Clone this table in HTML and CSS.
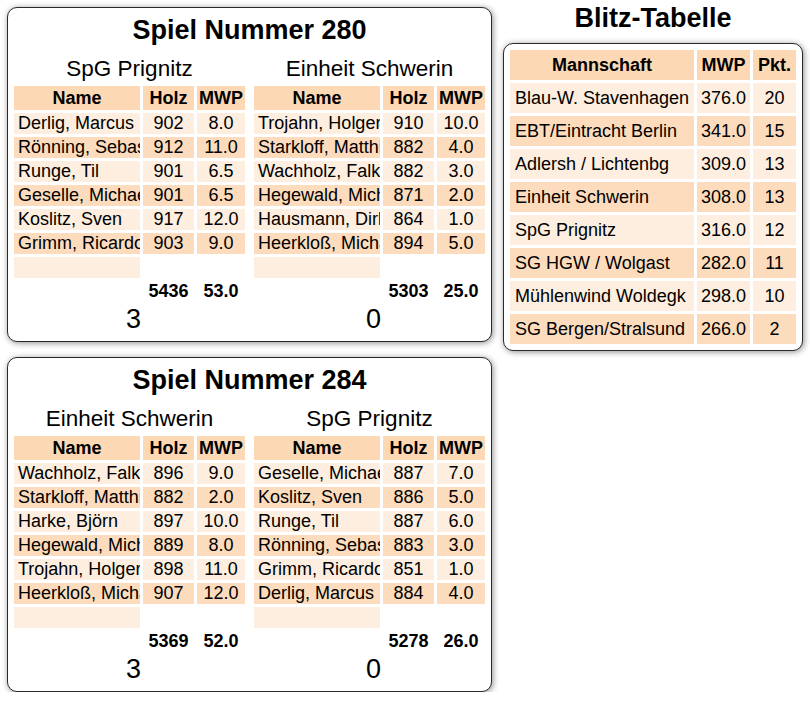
FILE: index.html
```html
<!DOCTYPE html>
<html lang="de">
<head>
<meta charset="utf-8">
<title>Blitz</title>
<link rel="stylesheet" href="styles.css">
</head>
<body>
<div class="page">
  <div class="games">
    <section class="box game">
      <h2 class="title">Spiel Nummer 280</h2>
      <div class="teams">
        <div class="team">
          <div class="team-name">SpG Prignitz</div>
          <table class="res">
            <tr><th class="c-name">Name</th><th class="c-holz">Holz</th><th class="c-mwp">MWP</th></tr>
            <tr><td class="n">Derlig, Marcus</td><td>902</td><td>8.0</td></tr>
            <tr><td class="n">Rönning, Sebastian</td><td>912</td><td>11.0</td></tr>
            <tr><td class="n">Runge, Til</td><td>901</td><td>6.5</td></tr>
            <tr><td class="n">Geselle, Michael</td><td>901</td><td>6.5</td></tr>
            <tr><td class="n">Koslitz, Sven</td><td>917</td><td>12.0</td></tr>
            <tr><td class="n">Grimm, Ricardo</td><td>903</td><td>9.0</td></tr>
            <tr><td class="n"></td><td class="blank"></td><td class="blank"></td></tr>
            <tr class="sum"><td class="blank"></td><td>5436</td><td>53.0</td></tr>
          </table>
          <div class="score">3</div>
        </div>
        <div class="team">
          <div class="team-name">Einheit Schwerin</div>
          <table class="res">
            <tr><th class="c-name">Name</th><th class="c-holz">Holz</th><th class="c-mwp">MWP</th></tr>
            <tr><td class="n">Trojahn, Holger</td><td>910</td><td>10.0</td></tr>
            <tr><td class="n">Starkloff, Matthias</td><td>882</td><td>4.0</td></tr>
            <tr><td class="n">Wachholz, Falko</td><td>882</td><td>3.0</td></tr>
            <tr><td class="n">Hegewald, Michael</td><td>871</td><td>2.0</td></tr>
            <tr><td class="n">Hausmann, Dirk</td><td>864</td><td>1.0</td></tr>
            <tr><td class="n">Heerkloß, Michael</td><td>894</td><td>5.0</td></tr>
            <tr><td class="n"></td><td class="blank"></td><td class="blank"></td></tr>
            <tr class="sum"><td class="blank"></td><td>5303</td><td>25.0</td></tr>
          </table>
          <div class="score">0</div>
        </div>
      </div>
    </section>

    <section class="box game">
      <h2 class="title">Spiel Nummer 284</h2>
      <div class="teams">
        <div class="team">
          <div class="team-name">Einheit Schwerin</div>
          <table class="res">
            <tr><th class="c-name">Name</th><th class="c-holz">Holz</th><th class="c-mwp">MWP</th></tr>
            <tr><td class="n">Wachholz, Falko</td><td>896</td><td>9.0</td></tr>
            <tr><td class="n">Starkloff, Matthias</td><td>882</td><td>2.0</td></tr>
            <tr><td class="n">Harke, Björn</td><td>897</td><td>10.0</td></tr>
            <tr><td class="n">Hegewald, Michael</td><td>889</td><td>8.0</td></tr>
            <tr><td class="n">Trojahn, Holger</td><td>898</td><td>11.0</td></tr>
            <tr><td class="n">Heerkloß, Michael</td><td>907</td><td>12.0</td></tr>
            <tr><td class="n"></td><td class="blank"></td><td class="blank"></td></tr>
            <tr class="sum"><td class="blank"></td><td>5369</td><td>52.0</td></tr>
          </table>
          <div class="score">3</div>
        </div>
        <div class="team">
          <div class="team-name">SpG Prignitz</div>
          <table class="res">
            <tr><th class="c-name">Name</th><th class="c-holz">Holz</th><th class="c-mwp">MWP</th></tr>
            <tr><td class="n">Geselle, Michael</td><td>887</td><td>7.0</td></tr>
            <tr><td class="n">Koslitz, Sven</td><td>886</td><td>5.0</td></tr>
            <tr><td class="n">Runge, Til</td><td>887</td><td>6.0</td></tr>
            <tr><td class="n">Rönning, Sebastian</td><td>883</td><td>3.0</td></tr>
            <tr><td class="n">Grimm, Ricardo</td><td>851</td><td>1.0</td></tr>
            <tr><td class="n">Derlig, Marcus</td><td>884</td><td>4.0</td></tr>
            <tr><td class="n"></td><td class="blank"></td><td class="blank"></td></tr>
            <tr class="sum"><td class="blank"></td><td>5278</td><td>26.0</td></tr>
          </table>
          <div class="score">0</div>
        </div>
      </div>
    </section>
  </div>

  <div class="standings">
    <h2 class="title blitz-title">Blitz-Tabelle</h2>
    <section class="box blitz">
      <table class="tab">
        <tr><th class="c-team">Mannschaft</th><th class="c-bmwp">MWP</th><th class="c-pkt">Pkt.</th></tr>
        <tr><td class="n">Blau-W. Stavenhagen</td><td>376.0</td><td>20</td></tr>
        <tr><td class="n">EBT/Eintracht Berlin</td><td>341.0</td><td>15</td></tr>
        <tr><td class="n">Adlersh / Lichtenbg</td><td>309.0</td><td>13</td></tr>
        <tr><td class="n">Einheit Schwerin</td><td>308.0</td><td>13</td></tr>
        <tr><td class="n">SpG Prignitz</td><td>316.0</td><td>12</td></tr>
        <tr><td class="n">SG HGW / Wolgast</td><td>282.0</td><td>11</td></tr>
        <tr><td class="n">Mühlenwind Woldegk</td><td>298.0</td><td>10</td></tr>
        <tr><td class="n">SG Bergen/Stralsund</td><td>266.0</td><td>2</td></tr>
      </table>
    </section>
  </div>
</div>
</body>
</html>
```

FILE: styles.css
```css
html, body {
  margin: 0;
  padding: 0;
  background: #ffffff;
}

body {
  font-family: "Liberation Sans", Arial, sans-serif;
  font-size: 18px;
  color: #000000;
}

.page {
  display: flex;
  align-items: flex-start;
  gap: 11px;
  padding: 2px 0 0 7px;
}

.games {
  display: flex;
  flex-direction: column;
  gap: 15px;
  margin-top: 5px;
}

.box {
  background: #ffffff;
  border: 1px solid #2a2a2a;
  border-radius: 10px;
  box-shadow: 1px 1px 6px rgba(0, 0, 0, 0.45);
}

.game {
  padding: 7px 3px 6px 3px;
}

.title {
  margin: 0;
  font-size: 27px;
  line-height: 31px;
  font-weight: bold;
  text-align: center;
}

.teams {
  display: flex;
  gap: 3px;
  margin-top: 10px;
}

.team {
  display: flex;
  flex-direction: column;
  width: 237px;
}

.team-name {
  font-size: 22.5px;
  line-height: 26px;
  text-align: center;
}

.res {
  margin-top: 1px;
  width: 237px;
  table-layout: fixed;
  border-collapse: separate;
  border-spacing: 3px;
}

.res th, .tab th {
  background: #fdd8b4;
  font-weight: bold;
  text-align: center;
  padding: 0;
}

.res th {
  height: 24px;
  line-height: 24px;
}

.c-name { width: 126px; }
.c-holz { width: 51px; }
.c-mwp { width: 48px; }

.res td {
  height: 21px;
  line-height: 21px;
  padding: 0;
  text-align: center;
  white-space: nowrap;
  overflow: hidden;
}

.res td.n, .tab td.n {
  text-align: left;
  padding-left: 4px;
}

.res tr:nth-child(even) td,
.tab tr:nth-child(even) td {
  background: #fdeedf;
}

.res tr:nth-child(odd) td,
.tab tr:nth-child(odd) td {
  background: #fddcbd;
}

.res tr:nth-child(n) td.blank,
.res tr.sum:nth-child(n) td {
  background: transparent;
}

.res tr.sum td {
  font-weight: bold;
}

.score {
  margin-top: -1px;
  padding-left: 8px;
  font-size: 27px;
  line-height: 31px;
  text-align: center;
}

.standings {
  display: flex;
  flex-direction: column;
  width: 300px;
}

.blitz-title {
  margin-top: 1px;
  margin-bottom: 9px;
}

.blitz {
  padding: 3px;
}

.tab {
  width: 292px;
  table-layout: fixed;
  border-collapse: separate;
  border-spacing: 3px;
}

.tab th {
  height: 30px;
  line-height: 30px;
}

.c-team { width: 184px; }
.c-bmwp { width: 53px; }
.c-pkt { width: 43px; }

.tab td {
  height: 30px;
  line-height: 30px;
  padding: 0;
  text-align: center;
  white-space: nowrap;
  overflow: hidden;
}

.tab td.n {
  padding-left: 5px;
}
```
